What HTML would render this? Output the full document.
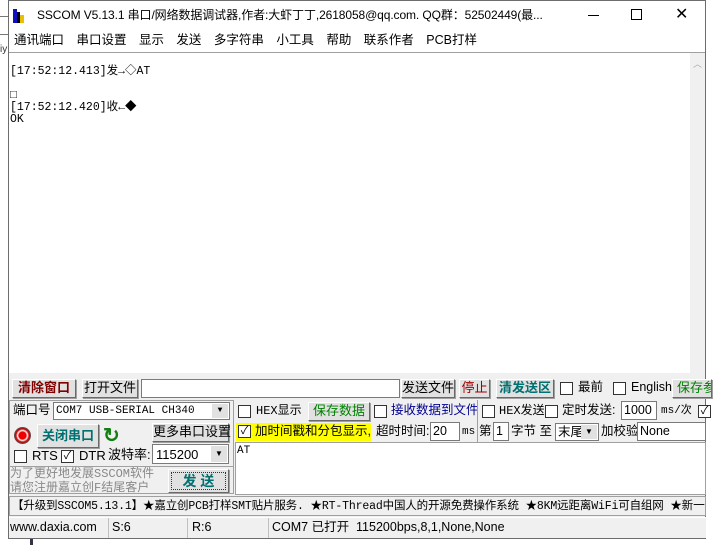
<!DOCTYPE html>
<html><head><meta charset="utf-8"><style>
*{margin:0;padding:0;box-sizing:border-box}
body{width:714px;height:545px;overflow:hidden;background:#fff;position:relative;font-family:"Liberation Sans","Noto Sans CJK SC",sans-serif;font-size:12px;color:#000}
.a{position:absolute;white-space:nowrap;line-height:15px}
.mono{font-family:"Liberation Mono","Noto Sans CJK SC",monospace;font-size:11px}
.btn{position:absolute;background:#e1e1e1;border:1px solid;border-color:#fff #696969 #696969 #fff;box-shadow:1px 1px 0 #a0a0a0;text-align:center;white-space:nowrap;font-size:13px;line-height:16px}
.in{position:absolute;background:#fff;border:1px solid #7a7a7a;white-space:nowrap;line-height:15px}
.cb{position:absolute;width:13px;height:13px;border:1px solid #333;background:#fff;font-size:11px;line-height:11px;text-align:center}
.dd{position:absolute;right:1px;top:1px;bottom:1px;width:16px;background:#e1e1e1;font-size:8px;text-align:center;line-height:16px}
</style></head><body>
<div class="a" style="left:0;top:16px;width:8px;height:1px;background:#777"></div>
<div class="a" style="left:0;top:34px;width:8px;height:1px;background:#777"></div>
<div class="a" style="left:0;top:42px;font-size:10px;color:#333">iy</div>
<div class="a" style="left:8px;top:0;width:698px;height:539px;border:1px solid #6d6d6d;background:#f0f0f0"></div>
<!-- title -->
<div class="a" style="left:9px;top:1px;width:696px;height:29px;background:#fff"></div>
<div class="a" style="left:13px;top:9px;width:4px;height:14px;background:#1010c0"></div>
<div class="a" style="left:17px;top:12px;width:3px;height:11px;background:#000"></div>
<div class="a" style="left:20px;top:15px;width:4px;height:8px;background:#e8c000"></div>
<div class="a" style="left:37px;top:8px;font-size:12px;letter-spacing:-0.1px">SSCOM V5.13.1 串口/网络数据调试器,作者:大虾丁丁,2618058@qq.com. QQ群：52502449(最...</div>
<div class="a" style="left:588px;top:15px;width:11px;height:1px;background:#000"></div>
<div class="a" style="left:631px;top:9px;width:11px;height:11px;border:1px solid #000"></div>
<div class="a" style="left:675px;top:6px;font-size:16px;line-height:18px">✕</div>
<!-- menu -->
<div class="a" style="left:9px;top:30px;width:696px;height:22px;background:#fff"></div>
<div class="a" style="left:14px;top:33px;font-size:12.5px;word-spacing:9px">通讯端口 串口设置 显示 发送 多字符串 小工具 帮助 联系作者 PCB打样</div>
<div class="a" style="left:9px;top:52px;width:696px;height:1px;background:#a0a0a0"></div>
<!-- receive -->
<div class="a" style="left:9px;top:53px;width:681px;height:320px;background:#fff"></div>
<div class="a" style="left:690px;top:53px;width:15px;height:320px;background:#f0f0f0"></div>
<div class="a" style="left:693px;top:57px;font-size:9px;color:#aaa">︿</div>
<div class="a mono" style="left:10px;top:66px;line-height:12px;font-size:11.5px">[17:52:12.413]发→◇AT<br><br>□<br>[17:52:12.420]收←◆<br>OK</div>
<!-- row 1 -->
<div class="btn" style="left:12px;top:379px;width:64px;height:19px;color:#800000;font-weight:bold">清除窗口</div>
<div class="btn" style="left:82px;top:379px;width:56px;height:19px">打开文件</div>
<div class="in" style="left:141px;top:379px;width:259px;height:19px"></div>
<div class="btn" style="left:401px;top:379px;width:54px;height:19px">发送文件</div>
<div class="btn" style="left:459px;top:379px;width:31px;height:19px;color:#a00000">停止</div>
<div class="btn" style="left:496px;top:379px;width:58px;height:19px;color:#007070;font-weight:bold">清发送区</div>
<div class="cb" style="left:560px;top:382px"></div>
<div class="a" style="left:578px;top:380px;font-size:12.5px">最前</div>
<div class="cb" style="left:613px;top:382px"></div>
<div class="a" style="left:631px;top:380px;font-size:12.5px">English</div>
<div class="btn" style="left:672px;top:379px;width:40px;height:19px;color:#008000;text-align:left;padding-left:4px;overflow:hidden">保存参</div>
<!-- left panel -->
<div class="a" style="left:9px;top:400px;width:225px;height:94px;border:1px solid #a0a0a0"></div>
<div class="a" style="left:13px;top:403px;font-size:12.5px">端口号</div>
<div class="in mono" style="left:53px;top:402px;width:177px;height:18px;padding:1px 2px">COM7 USB-SERIAL CH340<div class="dd" style="line-height:14px">▼</div></div>
<div class="a" style="left:14px;top:427px;width:17px;height:17px;border-radius:50%;background:radial-gradient(#e00 30%,#fff 40%,#c00 55%,#555 70%)"></div>
<div class="btn" style="left:37px;top:424px;width:62px;height:24px;color:#007070;font-weight:bold;line-height:22px">关闭串口</div>
<div class="a" style="left:103px;top:426px;font-size:20px;line-height:20px;color:#108010;font-weight:bold">↻</div>
<div class="btn" style="left:152px;top:423px;width:77px;height:19px">更多串口设置</div>
<div class="cb" style="left:14px;top:450px"></div>
<div class="a" style="left:32px;top:448px;font-size:13px">RTS</div>
<div class="cb" style="left:61px;top:450px">✓</div>
<div class="a" style="left:79px;top:448px;font-size:13px">DTR</div>
<div class="a" style="left:108px;top:447px;font-size:13px">波特率:</div>
<div class="in" style="left:152px;top:444px;width:77px;height:20px;padding:2px 3px;font-size:13px">115200<div class="dd">▼</div></div>
<div class="a" style="left:9px;top:466px;width:225px;height:1px;background:#a0a0a0"></div>
<div class="a mono" style="left:10px;top:467px;color:#888;font-size:12px;line-height:14px">为了更好地发展SSCOM软件<br>请您注册嘉立创F结尾客户</div>
<div class="btn" style="left:168px;top:469px;width:61px;height:24px;color:#007070;font-weight:bold;font-size:14px;outline:1px dotted #a00;outline-offset:-4px;line-height:22px">发 送</div>
<!-- right panel -->
<div class="cb" style="left:238px;top:405px"></div>
<div class="a mono" style="left:256px;top:404px;font-size:12px">HEX显示</div>
<div class="btn" style="left:308px;top:402px;width:62px;height:19px;color:#008000">保存数据</div>
<div class="cb" style="left:374px;top:405px"></div>
<div class="a" style="left:391px;top:403px;font-size:12.5px;color:#000090">接收数据到文件</div>
<div class="a" style="left:477px;top:400px;width:1px;height:46px;background:#a0a0a0"></div>
<div class="cb" style="left:482px;top:405px"></div>
<div class="a mono" style="left:499px;top:404px;font-size:12px">HEX发送</div>
<div class="cb" style="left:545px;top:405px"></div>
<div class="a" style="left:562px;top:403px;font-size:12.5px">定时发送:</div>
<div class="in" style="left:621px;top:401px;width:36px;height:19px;padding:1px 2px;font-size:12.5px">1000</div>
<div class="a mono" style="left:661px;top:404px">ms/次</div>
<div class="cb" style="left:698px;top:405px">✓</div>
<div class="a" style="left:236px;top:423px;width:135px;height:18px;background:#ffff00"></div>
<div class="cb" style="left:238px;top:425px">✓</div>
<div class="a" style="left:255px;top:424px;font-size:12.5px">加时间戳和分包显示,</div>
<div class="a" style="left:376px;top:424px;font-size:12.5px">超时时间:</div>
<div class="in" style="left:430px;top:422px;width:30px;height:19px;padding:1px 2px;font-size:12.5px">20</div>
<div class="a mono" style="left:462px;top:425px">ms</div>
<div class="a" style="left:479px;top:424px;font-size:12.5px">第</div>
<div class="in" style="left:493px;top:422px;width:16px;height:19px;padding:1px 2px;font-size:12.5px">1</div>
<div class="a" style="left:511px;top:424px;font-size:12.5px">字节 至</div>
<div class="in" style="left:555px;top:423px;width:44px;height:18px;padding:1px 2px;font-size:12.5px">末尾<div class="dd" style="line-height:14px">▼</div></div>
<div class="a" style="left:601px;top:424px;font-size:12.5px">加校验</div>
<div class="in" style="left:637px;top:422px;width:69px;height:19px;padding:1px 2px;font-size:12.5px">None</div>
<div class="in" style="left:235px;top:442px;width:471px;height:53px;border-color:#a0a0a0"></div>
<div class="a mono" style="left:237px;top:444px">AT</div>
<!-- marquee -->
<div class="a" style="left:9px;top:496px;width:697px;height:20px;border:1px solid #a0a0a0;background:#f0f0f0;overflow:hidden">
<div class="a mono" style="left:2px;top:2px;font-size:11.5px;letter-spacing:-0.15px">【升级到SSCOM5.13.1】★嘉立创PCB打样SMT贴片服务. ★RT-Thread中国人的开源免费操作系统 ★8KM远距离WiFi可自组网 ★新一代</div></div>
<!-- status -->
<div class="a" style="left:9px;top:517px;width:697px;height:21px;background:#f0f0f0;border-top:1px solid #fff"></div>
<div class="a" style="left:10px;top:520px;font-size:12.5px">www.daxia.com</div>
<div class="a" style="left:108px;top:518px;width:1px;height:20px;background:#c0c0c0"></div>
<div class="a" style="left:112px;top:520px;font-size:12.5px">S:6</div>
<div class="a" style="left:187px;top:518px;width:1px;height:20px;background:#c0c0c0"></div>
<div class="a" style="left:192px;top:520px;font-size:12.5px">R:6</div>
<div class="a" style="left:268px;top:518px;width:1px;height:20px;background:#c0c0c0"></div>
<div class="a" style="left:272px;top:520px;font-size:12.5px">COM7 已打开&nbsp; 115200bps,8,1,None,None</div>
<div class="a" style="left:0;top:539px;width:714px;height:6px;background:#fff"></div>
<div class="a" style="left:30px;top:539px;width:3px;height:6px;background:#334"></div>
</body></html>
